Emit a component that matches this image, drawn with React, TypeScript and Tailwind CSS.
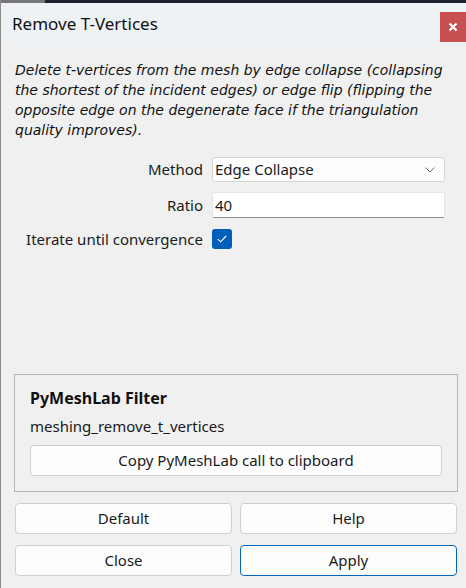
import React, { useState } from 'react';

const sans = "font-['Noto_Sans','Open_Sans',sans-serif]";

const Btn: React.FC<{ label: string; primary?: boolean; className?: string }> = ({ label, primary, className }) => (
  <button
    className={`h-[31px] rounded-[4px] bg-[#fdfdfd] text-[15px] text-[#1a1a1a] border ${
      primary ? 'border-[#0067c0]' : 'border-[#d0d0d0]'
    } ${className ?? ''}`}
  >
    {label}
  </button>
);

const App: React.FC = () => {
  const [iterate, setIterate] = useState(true);
  const [ratio, setRatio] = useState('40');

  return (
    <div className={`w-[466px] h-[588px] bg-[#f0f0f0] border-l border-[#8a8a8a] flex flex-col overflow-hidden ${sans}`}>
      {/* strip of the desktop above the window */}
      <div className="h-[3px] flex shrink-0">
        <div className="w-[44px] bg-[#77777a]" />
        <div className="flex-1 bg-[#1f2030]" />
      </div>

      {/* title bar */}
      <div className="h-[42px] bg-[#eef2f5] flex justify-between shrink-0">
        <div className="pl-[11px] pt-[8px] text-[17px] text-[#111]">Remove T-Vertices</div>
        <div className="mt-[9px] w-[26px] h-[30px] bg-[#c75050] flex items-center justify-center">
          <svg width="10" height="10" viewBox="0 0 10 10">
            <path d="M1.5 1.5 L8.5 8.5 M8.5 1.5 L1.5 8.5" stroke="#fff" strokeWidth="2.2" />
          </svg>
        </div>
      </div>

      {/* description */}
      <p className="mt-[15px] ml-[14px] text-[14px] leading-[20px] italic text-[#111] font-['DejaVu_Sans',sans-serif]">
        Delete t-vertices from the mesh by edge collapse (collapsing
        <br />
        the shortest of the incident edges) or edge flip (flipping the
        <br />
        opposite edge on the degenerate face if the triangulation
        <br />
        quality improves).
      </p>

      {/* parameters */}
      <div className="mt-[17px] grid grid-cols-[188px_233px] gap-x-[9px] gap-y-[10px] ml-[14px] items-center text-[15px] text-[#1a1a1a]">
        <div className="text-right">Method</div>
        <div className="h-[25px] bg-[#fdfdfd] border border-[#d5d5d5] rounded-[3px] flex items-center justify-between pl-[2px] pr-[9px]">
          <span>Edge Collapse</span>
          <svg width="10" height="6" viewBox="0 0 10 6">
            <path d="M0.5 0.5 L5 5 L9.5 0.5" fill="none" stroke="#6a6a6a" strokeWidth="1" />
          </svg>
        </div>

        <div className="text-right">Ratio</div>
        <input
          value={ratio}
          onChange={(e) => setRatio(e.target.value)}
          className="h-[26px] bg-white border border-[#e4e4e4] border-b-[#8a8a8a] rounded-[2px] pl-[2px] outline-none text-[15px]"
        />

        <div className="text-right">Iterate until convergence</div>
        <button
          onClick={() => setIterate(!iterate)}
          className={`w-[20px] h-[20px] rounded-[3px] flex items-center justify-center ${
            iterate ? 'bg-[#005fb8]' : 'bg-white border border-[#888]'
          }`}
        >
          {iterate && (
            <svg width="10" height="8" viewBox="0 0 10 8">
              <path d="M0.8 4.2 L3.6 6.8 L9.2 1" fill="none" stroke="#fff" strokeWidth="1.1" />
            </svg>
          )}
        </button>
      </div>

      <div className="flex-1" />

      {/* PyMeshLab group */}
      <div className="ml-[13px] w-[444px] h-[118px] border border-[#b4b4b4] px-[15px] pt-[12px]">
        <div className="font-bold text-[16px] text-[#111] leading-[22px]">PyMeshLab Filter</div>
        <div className="mt-[6px] text-[15px] text-[#1a1a1a] leading-[22px]">meshing_remove_t_vertices</div>
        <Btn label="Copy PyMeshLab call to clipboard" className="mt-[8px] w-full" />
      </div>

      {/* dialog buttons */}
      <div className="mt-[11px] mb-[12px] ml-[14px] grid grid-cols-[217px_217px] gap-x-[8px] gap-y-[11px]">
        <Btn label="Default" />
        <Btn label="Help" />
        <Btn label="Close" />
        <Btn label="Apply" primary />
      </div>
    </div>
  );
};

export default App;
